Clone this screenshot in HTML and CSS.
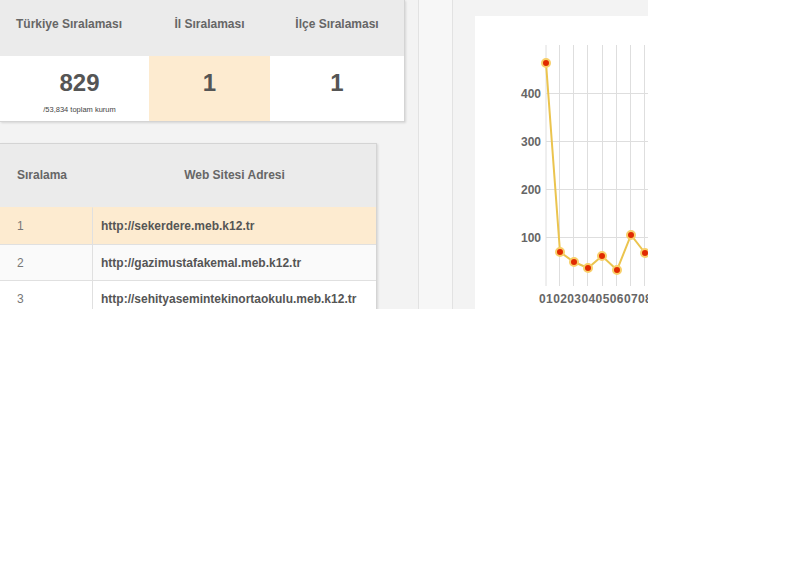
FILE: index.html
```html
<!DOCTYPE html>
<html lang="tr">
<head>
<meta charset="utf-8">
<title>Sıralama</title>
<link rel="stylesheet" href="styles.css">
</head>
<body>
<div class="viewport">
  <div class="left">
    <div class="card rank-card">
      <div class="rank-head rh1">Türkiye Sıralaması</div>
      <div class="rank-head">İl Sıralaması</div>
      <div class="rank-head">İlçe Sıralaması</div>
      <div class="rank-val rv1"><span class="big">829</span><span class="small">/53,834 toplam kurum</span></div>
      <div class="rank-val hl"><span class="big">1</span></div>
      <div class="rank-val"><span class="big">1</span></div>
    </div>
    <div class="card site-card">
      <div class="th c1">Sıralama</div>
      <div class="th c2">Web Sitesi Adresi</div>
      <div class="td c1 hl">1</div>
      <div class="td c2 hl url">http://sekerdere.meb.k12.tr</div>
      <div class="td c1 alt">2</div>
      <div class="td c2 alt url">http://gazimustafakemal.meb.k12.tr</div>
      <div class="td c1">3</div>
      <div class="td c2 url">http://sehityasemintekinortaokulu.meb.k12.tr</div>
    </div>
  </div>
  <div class="strip"></div>
  <div class="right">
    <div class="chart-card">
      <svg class="chart" width="200" height="300" viewBox="0 0 200 300">
        <g class="grid">
          <line x1="71" y1="77.5" x2="200" y2="77.5"/>
          <line x1="71" y1="125.5" x2="200" y2="125.5"/>
          <line x1="71" y1="173.5" x2="200" y2="173.5"/>
          <line x1="71" y1="221.5" x2="200" y2="221.5"/>
          <line x1="71" y1="29" x2="71" y2="270"/>
          <line x1="84.5" y1="29" x2="84.5" y2="270"/>
          <line x1="98.5" y1="29" x2="98.5" y2="270"/>
          <line x1="112.5" y1="29" x2="112.5" y2="270"/>
          <line x1="127.5" y1="29" x2="127.5" y2="270"/>
          <line x1="141.5" y1="29" x2="141.5" y2="270"/>
          <line x1="155.5" y1="29" x2="155.5" y2="270"/>
          <line x1="169.5" y1="29" x2="169.5" y2="270"/>
        </g>
        <g class="ylab">
          <text x="66" y="82">400</text>
          <text x="66" y="130">300</text>
          <text x="66" y="178">200</text>
          <text x="66" y="226">100</text>
        </g>
        <text class="xlab" x="64" y="287">0102030405060708</text>
        <polyline class="series" points="71,47 85,236 99,246 113,252 127,240 142,254 156,219 170,237"/>
        <g class="pts">
          <circle cx="71" cy="47" r="4"/>
          <circle cx="85" cy="236" r="4"/>
          <circle cx="99" cy="246" r="4"/>
          <circle cx="113" cy="252" r="4"/>
          <circle cx="127" cy="240" r="4"/>
          <circle cx="142" cy="254" r="4"/>
          <circle cx="156" cy="219" r="4"/>
          <circle cx="170" cy="237" r="4"/>
        </g>
      </svg>
    </div>
  </div>
</div>
</body>
</html>
```

FILE: styles.css
```css
html, body {
  margin: 0;
  padding: 0;
  background: #ffffff;
}
body {
  width: 800px;
  height: 573px;
  font-family: "Liberation Sans", Arial, sans-serif;
}
.viewport {
  width: 648px;
  height: 309px;
  overflow: hidden;
  background: #f3f3f3;
  display: flex;
}
.left {
  width: 418px;
  flex: 0 0 418px;
  border-right: 1px solid #e2e2e2;
  display: flex;
  flex-direction: column;
  gap: 21px;
}
.strip {
  width: 33px;
  flex: 0 0 33px;
  background: #f7f7f7;
  border-right: 1px solid #e2e2e2;
}
.right {
  flex: 1;
  padding: 16px 0 0 22px;
}
.card {
  background: #fff;
  border: 1px solid #d4d4d4;
  border-left: none;
  box-shadow: 1px 1px 2px rgba(0,0,0,0.12);
}
.rank-card {
  width: 404px;
  border-top: none;
  display: grid;
  grid-template-columns: 149px 121px 134px;
  grid-template-rows: 56px 65px;
}
.rank-head {
  background: #ebebeb;
  color: #666;
  font-weight: bold;
  font-size: 12px;
  display: flex;
  align-items: center;
  justify-content: center;
  padding-bottom: 8px;
  box-sizing: border-box;
}
.rh1 {
  padding-right: 11px;
}
.rank-val {
  display: flex;
  flex-direction: column;
  align-items: center;
  padding-top: 13px;
  color: #555;
}
.rv1 {
  padding-left: 10px;
}
.rank-val.hl {
  background: #fdebd0;
}
.big {
  font-size: 24px;
  font-weight: bold;
  line-height: 28px;
}
.small {
  font-size: 7.5px;
  color: #444;
  margin-top: 8px;
}
.site-card {
  width: 376px;
  display: grid;
  grid-template-columns: 93px 283px;
  grid-template-rows: 63px 37px 36px 36px;
}
.th {
  background: #ebebeb;
  color: #666;
  font-weight: bold;
  font-size: 12px;
  display: flex;
  align-items: center;
  padding-bottom: 2px;
  box-sizing: border-box;
}
.th.c1 {
  padding-left: 17px;
}
.th.c2 {
  justify-content: center;
}
.td {
  display: flex;
  align-items: center;
  font-size: 12px;
  color: #777;
  border-top: 1px solid #e0e0e0;
  background: #fff;
}
.td.c1 {
  padding-left: 17px;
  border-right: 1px solid #e0e0e0;
}
.td.c2 {
  padding-left: 8px;
}
.td.url {
  font-weight: bold;
  color: #555;
}
.td.hl {
  background: #fdebd0;
  border-top-color: #fdebd0;
}
.td.alt {
  background: #fafafa;
}
.chart-card {
  background: #fff;
  width: 200px;
  height: 300px;
}
.chart {
  display: block;
}
.grid line {
  stroke: #dedede;
  stroke-width: 1;
}
.ylab text {
  text-anchor: end;
  font-family: "Liberation Sans", Arial, sans-serif;
  font-weight: bold;
  font-size: 12px;
  fill: #666;
}
.xlab {
  font-family: "Liberation Sans", Arial, sans-serif;
  font-weight: bold;
  font-size: 12px;
  fill: #666;
  letter-spacing: 0.4px;
}
.series {
  fill: none;
  stroke: #ebc44e;
  stroke-width: 2;
}
.pts circle {
  fill: #e02a00;
  stroke: #f8cf6a;
  stroke-width: 2;
}
```
